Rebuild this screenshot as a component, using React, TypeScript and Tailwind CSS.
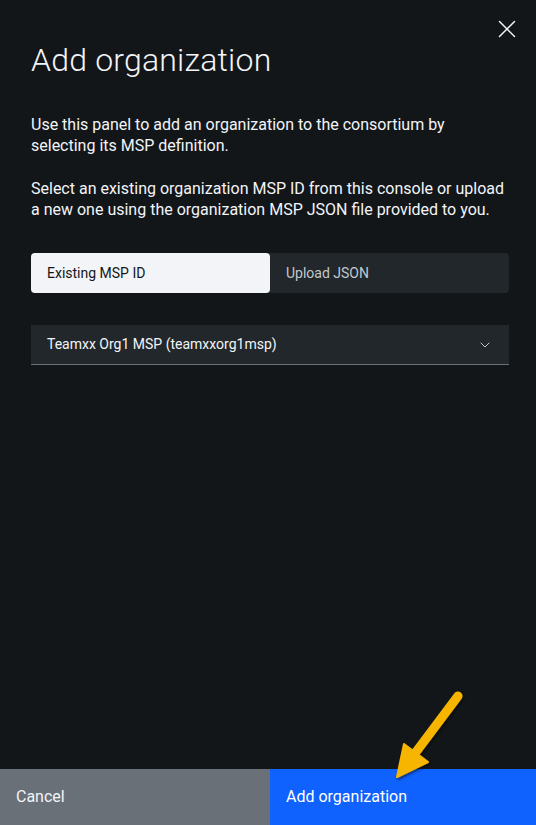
import { X, ChevronDown } from 'lucide-react'

const font = { fontFamily: "Roboto, 'Liberation Sans', sans-serif" }

function Arrow() {
  return (
    <svg
      className="absolute left-[380px] top-[680px] pointer-events-none"
      width="100"
      height="110"
      viewBox="0 0 100 110"
    >
      <defs>
        <filter id="sh" x="-20%" y="-20%" width="140%" height="140%">
          <feDropShadow dx="1" dy="1.5" stdDeviation="1.5" floodColor="#000" floodOpacity="0.6" />
        </filter>
      </defs>
      <g filter="url(#sh)" fill="#f7b500" stroke="#f7b500">
        <line x1="78" y1="16" x2="36" y2="72" strokeWidth="9" strokeLinecap="round" />
        <polygon points="17,97 24,64 48,82" strokeWidth="2" strokeLinejoin="round" />
      </g>
    </svg>
  )
}

export default function App() {
  return (
    <div className="relative flex h-[825px] w-[536px] flex-col bg-[#121619] text-[#f2f4f8]" style={font}>
      <button className="absolute left-[492px] top-[14px] text-[#f2f4f8]">
        <X className="h-[30px] w-[30px]" strokeWidth={1.2} />
      </button>

      <div className="flex-1 pl-[31px] pr-[27px] pt-[40px]">
        <h1 className="text-[32px] font-light leading-[40px] tracking-[0.2px]">Add organization</h1>

        <div className="mt-[34px] text-[16px] leading-[21px]">
          <p>Use this panel to add an organization to the consortium by selecting its MSP definition.</p>
          <p className="mt-[22px]">
            Select an existing organization MSP ID from this console or upload a new one using the organization MSP
            JSON file provided to you.
          </p>
        </div>

        <div className="mt-[33px] flex h-[40px] rounded-[4px] bg-[#21272a] text-[14px]">
          <button className="flex w-[239px] items-center rounded-[4px] bg-[#f2f4f8] px-4 text-[#121619]">
            Existing MSP ID
          </button>
          <button className="flex flex-1 items-center px-4 text-[#c1c7cd]">Upload JSON</button>
        </div>

        <div className="mt-[32px] flex h-[40px] items-center justify-between border-b border-[#697077] bg-[#21272a] px-4 text-[14px]">
          <span>Teamxx Org1 MSP (teamxxorg1msp)</span>
          <ChevronDown className="h-4 w-4 text-[#c1c7cd]" strokeWidth={1.5} />
        </div>
      </div>

      <div className="flex h-[56px] text-[16px]">
        <button className="flex w-[270px] items-center bg-[#697077] px-4 text-[#f2f4f8]">Cancel</button>
        <button className="flex flex-1 items-center bg-[#0f62fe] px-4 text-white">Add organization</button>
      </div>

      <Arrow />
    </div>
  )
}
